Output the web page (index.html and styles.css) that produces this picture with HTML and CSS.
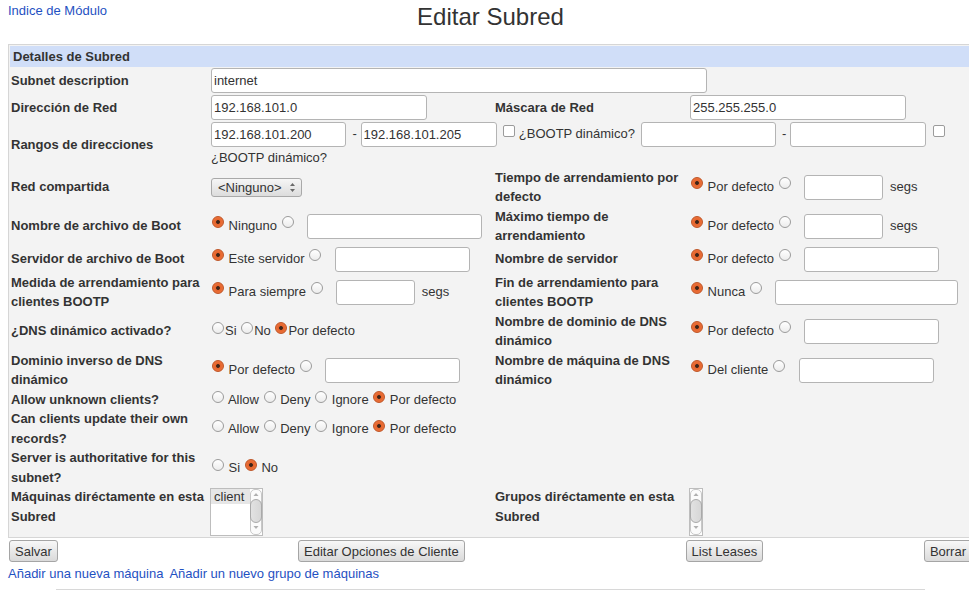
FILE: index.html
```html
<!DOCTYPE html>
<html lang="es">
<head>
<meta charset="utf-8">
<title>Editar Subred</title>
<link rel="stylesheet" href="styles.css">
</head>
<body>
<div class="topbar">
  <div class="tl"><a href="#">Indice de Módulo</a></div>
  <h1 class="title">Editar Subred</h1>
  <div></div>
</div>
<table class="form">
  <colgroup><col class="c1"><col class="c2"><col class="c3"><col class="c4"></colgroup>
  <tr class="head"><td colspan="4">Detalles de Subred</td></tr>
  <tr>
    <th>Subnet description</th>
    <td colspan="3"><input class="txt w496" value="internet"></td>
  </tr>
  <tr>
    <th>Dirección de Red</th>
    <td><input class="txt w216" value="192.168.101.0"></td>
    <th>Máscara de Red</th>
    <td><input class="txt w216" value="255.255.255.0"></td>
  </tr>
  <tr>
    <th>Rangos de direcciones</th>
    <td colspan="3"><input class="txt w135" value="192.168.101.200"> - <input class="txt w136" value="192.168.101.205"> <input type="checkbox" class="cb"> ¿BOOTP dinámico? <input class="txt w135 sp"> - <input class="txt w136"> <input type="checkbox" class="cb"> ¿BOOTP dinámico?</td>
  </tr>
  <tr>
    <th>Red compartida</th>
    <td><span class="select">&lt;Ninguno&gt;<svg class="sel-arrows" width="7" height="11" viewBox="0 0 7 11"><path d="M3.5 1 L6 4 H1 Z M3.5 10 L6 7 H1 Z" fill="#6a6a6a"/></svg></span></td>
    <th>Tiempo de arrendamiento por defecto</th>
    <td><input type="radio" class="rd" checked> Por defecto <input type="radio" class="rd"> <input class="txt w79 after"> segs</td>
  </tr>
  <tr>
    <th>Nombre de archivo de Boot</th>
    <td><input type="radio" class="rd" checked> Ninguno <input type="radio" class="rd"> <input class="txt w175 after"></td>
    <th>Máximo tiempo de arrendamiento</th>
    <td><input type="radio" class="rd" checked> Por defecto <input type="radio" class="rd"> <input class="txt w79 after"> segs</td>
  </tr>
  <tr>
    <th>Servidor de archivo de Boot</th>
    <td><input type="radio" class="rd" checked> Este servidor <input type="radio" class="rd"> <input class="txt w135 after"></td>
    <th>Nombre de servidor</th>
    <td><input type="radio" class="rd" checked> Por defecto <input type="radio" class="rd"> <input class="txt w135 after"></td>
  </tr>
  <tr>
    <th>Medida de arrendamiento para clientes BOOTP</th>
    <td><input type="radio" class="rd" checked> Para siempre <input type="radio" class="rd"> <input class="txt w79 after"> segs</td>
    <th>Fin de arrendamiento para clientes BOOTP</th>
    <td><input type="radio" class="rd" checked> Nunca <input type="radio" class="rd"> <input class="txt w183 after"></td>
  </tr>
  <tr>
    <th>¿DNS dinámico activado?</th>
    <td><input type="radio" class="rd">Si <input type="radio" class="rd">No <input type="radio" class="rd" checked>Por defecto</td>
    <th>Nombre de dominio de DNS dinámico</th>
    <td><input type="radio" class="rd" checked> Por defecto <input type="radio" class="rd"> <input class="txt w135 after"></td>
  </tr>
  <tr>
    <th>Dominio inverso de DNS dinámico</th>
    <td><input type="radio" class="rd" checked> Por defecto <input type="radio" class="rd"> <input class="txt w135 after"></td>
    <th>Nombre de máquina de DNS dinámico</th>
    <td><input type="radio" class="rd" checked> Del cliente <input type="radio" class="rd"> <input class="txt w135 after"></td>
  </tr>
  <tr>
    <th>Allow unknown clients?</th>
    <td colspan="3"><input type="radio" class="rd"> Allow <input type="radio" class="rd"> Deny <input type="radio" class="rd"> Ignore <input type="radio" class="rd" checked> Por defecto</td>
  </tr>
  <tr>
    <th>Can clients update their own records?</th>
    <td colspan="3"><input type="radio" class="rd"> Allow <input type="radio" class="rd"> Deny <input type="radio" class="rd"> Ignore <input type="radio" class="rd" checked> Por defecto</td>
  </tr>
  <tr>
    <th>Server is authoritative for this subnet?</th>
    <td colspan="3"><input type="radio" class="rd"> Si <input type="radio" class="rd" checked> No</td>
  </tr>
  <tr class="lists">
    <th>Máquinas diréctamente en esta Subred</th>
    <td>
      <div class="listbox">
        <div class="opts"><div class="opt">client</div></div>
        <div class="sb">
          <svg class="sb-arrow" width="12" height="9" viewBox="0 0 12 9"><path d="M6 3 L8.5 6 H3.5 Z" fill="#b0b0b0"/></svg>
          <div class="sb-thumb"></div>
          <svg class="sb-arrow" width="12" height="9" viewBox="0 0 12 9"><path d="M6 6 L8.5 3 H3.5 Z" fill="#b0b0b0"/></svg>
        </div>
      </div>
    </td>
    <th>Grupos diréctamente en esta Subred</th>
    <td>
      <div class="listbox narrow">
        <div class="sb">
          <svg class="sb-arrow" width="12" height="9" viewBox="0 0 12 9"><path d="M6 3 L8.5 6 H3.5 Z" fill="#b0b0b0"/></svg>
          <div class="sb-thumb"></div>
          <svg class="sb-arrow" width="12" height="9" viewBox="0 0 12 9"><path d="M6 6 L8.5 3 H3.5 Z" fill="#b0b0b0"/></svg>
        </div>
      </div>
    </td>
  </tr>
</table>
<table class="btns">
  <tr>
    <td class="l"><button class="btn">Salvar</button></td>
    <td class="c"><button class="btn">Editar Opciones de Cliente</button></td>
    <td class="c"><button class="btn">List Leases</button></td>
    <td class="r"><button class="btn">Borrar</button></td>
  </tr>
</table>
<div class="links">
  <a href="#">Añadir una nueva máquina</a>
  <a href="#">Añadir un nuevo grupo de máquinas</a>
</div>
<hr class="sep">
</body>
</html>
```

FILE: styles.css
```css
html {
  overflow: hidden;
}

body {
  margin: 0 8px;
  width: 965px;
  font-family: "Liberation Sans", Arial, sans-serif;
  font-size: 13px;
  color: #333;
  background: #fff;
}

a {
  color: #1f51c2;
  text-decoration: none;
}

.topbar {
  display: grid;
  grid-template-columns: 1fr auto 1fr;
  height: 41px;
  padding-top: 3px;
}

.topbar .tl {
  line-height: 15px;
}

.title {
  margin: 0;
  font-size: 24px;
  font-weight: normal;
  line-height: 28px;
  color: #333;
}

.form {
  width: 965px;
  table-layout: fixed;
  border-collapse: separate;
  border-spacing: 0;
  padding: 1px;
  border: 1px solid #d6d6d6;
  background: #f3f3f3;
}

.c1 { width: 200px; }
.c2 { width: 284px; }
.c3 { width: 195px; }
.c4 { width: 282px; }

.form th,
.form td {
  padding: 0 1px;
  line-height: 19.5px;
  vertical-align: middle;
  text-align: left;
  white-space: normal;
}

.form th {
  font-weight: bold;
}

.form tr.head td {
  height: 21px;
  padding: 0 3px;
  background: #d0def8;
  font-weight: bold;
}

.form tr.lists th,
.form tr.lists td {
  vertical-align: top;
}

.txt {
  box-sizing: border-box;
  height: 25px;
  margin: 1px 3px 1px 0;
  padding: 0 2px;
  border: 1px solid #b4b4b4;
  border-radius: 3px;
  background: #fff;
  font-family: "Liberation Sans", Arial, sans-serif;
  font-size: 13px;
  color: #333;
  vertical-align: middle;
}

.txt.after { margin-left: 9px; }
.txt.sp { margin-left: 2px; }

.w496 { width: 496px; }
.w216 { width: 216px; }
.w183 { width: 183px; }
.w175 { width: 175px; }
.w135 { width: 135px; }
.w136 { width: 136px; }
.w79 { width: 79px; }

.rd {
  -webkit-appearance: none;
  appearance: none;
  box-sizing: border-box;
  width: 12px;
  height: 12px;
  margin: 0 1px;
  border: 1px solid #9b9b9b;
  border-radius: 50%;
  background: linear-gradient(#ffffff, #ececec);
  vertical-align: 1px;
}

.rd:checked {
  border-color: #bf5425;
  background: radial-gradient(circle, #3e2418 0, #3e2418 1.5px, #e5642c 2.3px, #ef7a44 100%);
}

.cb {
  -webkit-appearance: none;
  appearance: none;
  box-sizing: border-box;
  width: 12px;
  height: 12px;
  margin: 0;
  border: 1px solid #9b9b9b;
  border-radius: 2px;
  background: #fff;
  vertical-align: 1px;
}

.select {
  display: inline-flex;
  align-items: center;
  justify-content: space-between;
  box-sizing: border-box;
  width: 91px;
  height: 19px;
  padding: 0 5px 0 6px;
  border: 1px solid #a9a9a9;
  border-radius: 3px;
  background: linear-gradient(#f6f6f6, #dcdcdc);
  line-height: 17px;
  vertical-align: middle;
}

.sel-arrows {
  display: block;
}

.listbox {
  display: inline-flex;
  box-sizing: border-box;
  width: 53px;
  height: 48px;
  margin: 1px 0 0 -1px;
  border: 1px solid #bdbdbd;
  background: #fff;
  vertical-align: top;
}

.listbox.narrow {
  width: 14px;
}

.opts {
  flex: 1;
}

.opt {
  background: #e6e6e6;
  padding: 0 3px;
  line-height: 15px;
  font-size: 13px;
}

.sb {
  display: flex;
  flex-direction: column;
  align-items: center;
  box-sizing: border-box;
  width: 12px;
  border: 1px solid #c8c8c8;
  border-radius: 5px;
  background: #fbfbfb;
}

.sb-arrow {
  display: block;
  flex: none;
}

.sb-thumb {
  box-sizing: border-box;
  width: 12px;
  height: 24px;
  margin: 0 -1px;
  border: 1px solid #a9a9a9;
  border-radius: 6px;
  background: linear-gradient(90deg, #e2e2e2, #d6d6d6);
}

.btns {
  width: 965px;
  border-collapse: separate;
  border-spacing: 0;
  margin-top: 1px;
}

.btns td {
  padding: 1px;
}

.btns .l { text-align: left; }
.btns .c { text-align: center; }
.btns .r { text-align: right; }

.btn {
  box-sizing: border-box;
  height: 22px;
  margin: 0;
  padding: 0 5px;
  border: 1px solid #a5a5a5;
  border-radius: 3px;
  background: linear-gradient(#f8f8f8, #dadada);
  font-family: "Liberation Sans", Arial, sans-serif;
  font-size: 13px;
  color: #333;
}

.links {
  display: flex;
  gap: 6px;
  margin-top: 3px;
  line-height: 15px;
}

.sep {
  height: 0;
  margin: 8px 48px 0;
  border: 0;
  border-top: 1px solid #d8d8d8;
}
```
